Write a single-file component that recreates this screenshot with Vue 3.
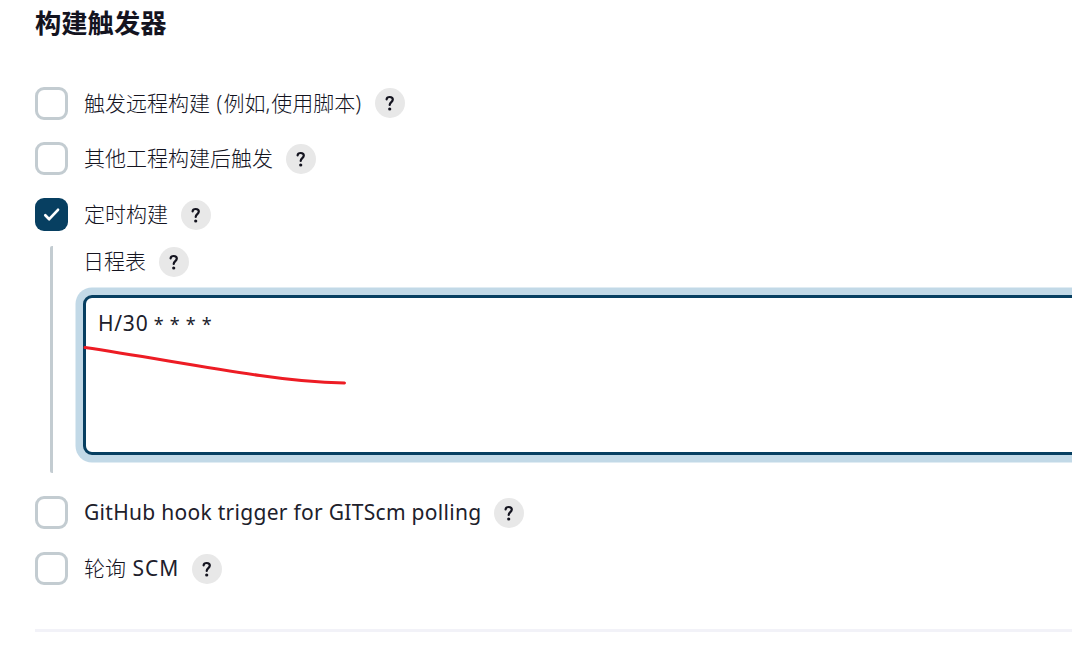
<script setup>
import { ref } from 'vue'

const before = [
  { id: 'remote', parts: ['触发远程构建', ' (', '例如', ',', '使用脚本', ')'], checked: false },
  { id: 'upstream', parts: ['其他工程构建后触发'], checked: false },
  { id: 'timer', parts: ['定时构建'], checked: true },
]
const after = [
  { id: 'github', parts: ['GitHub hook trigger for GITScm polling'], checked: false },
  { id: 'scm', parts: ['轮询', ' SCM'], checked: false },
]
const isLatin = (text) => /^[\x20-\x7e]+$/.test(text)
const schedule = ref('H/30 * * * *')
const period = () => schedule.value.split(' ')[0]
const rest = () => schedule.value.slice(period().length)
</script>

<template>
  <main class="page">
    <h2 class="title">构建触发器</h2>

    <div v-for="item in before" :key="item.id" class="row" :class="item.id">
      <span class="box" :class="{ checked: item.checked }">
        <svg v-if="item.checked" width="33" height="33" viewBox="0 0 33 33">
          <path d="M10.3 17.3 L14.2 21.2 L23 11.8" />
        </svg>
      </span>
      <span class="label"><span v-for="(part, i) in item.parts" :key="i" :class="{ latin: isLatin(part) }">{{ part }}</span></span>
      <span class="help"><svg width="30" height="30" viewBox="0 0 30 30"><path d="M11.6 11.3C11.8 9.8 13 9 14.7 9C16.6 9 17.8 10 17.8 11.6C17.8 14 14.7 14.2 14.7 16.9" /><circle cx="14.7" cy="21" r="1.6" /></svg></span>
    </div>

    <section class="nested">
      <div class="subrow">
        <span class="label">日程表</span>
        <span class="help"><svg width="30" height="30" viewBox="0 0 30 30"><path d="M11.6 11.3C11.8 9.8 13 9 14.7 9C16.6 9 17.8 10 17.8 11.6C17.8 14 14.7 14.2 14.7 16.9" /><circle cx="14.7" cy="21" r="1.6" /></svg></span>
      </div>
      <div class="field">
        <span class="value"><span class="period">{{ period() }}</span><span class="stars">{{ rest() }}</span></span>
        <svg class="stroke" width="270" height="44" viewBox="0 0 270 44">
          <path d="M3 3.5C60 12 120 23 178 31.5C205 35.5 235 38.5 262.5 39" />
        </svg>
      </div>
    </section>

    <div v-for="item in after" :key="item.id" class="row" :class="item.id">
      <span class="box"></span>
      <span class="label"><span v-for="(part, i) in item.parts" :key="i" :class="{ latin: isLatin(part) }">{{ part }}</span></span>
      <span class="help"><svg width="30" height="30" viewBox="0 0 30 30"><path d="M11.6 11.3C11.8 9.8 13 9 14.7 9C16.6 9 17.8 10 17.8 11.6C17.8 14 14.7 14.2 14.7 16.9" /><circle cx="14.7" cy="21" r="1.6" /></svg></span>
    </div>

    <hr class="divider" />
  </main>
</template>

<style>
body {
  background: #fff;
  overflow: hidden;
}
</style>

<style scoped>
.page {
  box-sizing: border-box;
  height: 663px;
  padding-left: 35px;
  overflow: hidden;
  color: #14141f;
  font-family: "Noto Sans", "Noto Sans CJK SC", sans-serif;
  font-size: 21px;
}
.title {
  margin: 0 0 43px;
  padding-top: 2px;
  height: 42px;
  line-height: 42px;
  font-size: 26.3px;
  font-weight: 700;
}
.row {
  display: flex;
  align-items: center;
  height: 33px;
  margin-bottom: 23px;
}
.remote {
  margin-bottom: 22px;
}
.timer {
  margin-bottom: 15px;
}
.box {
  box-sizing: border-box;
  flex: none;
  width: 33px;
  height: 33px;
  margin-right: 16px;
  border: 3px solid #c3ccd1;
  border-radius: 9px;
}
.box.checked {
  border: 0;
  background: #073f61;
}
.box svg {
  display: block;
}
.box path {
  fill: none;
  stroke: #fff;
  stroke-width: 2.7;
  stroke-linecap: round;
  stroke-linejoin: round;
}
.label {
  line-height: 33px;
  font-weight: 300;
  white-space: pre;
}
.latin {
  font-weight: 400;
  color: #20202b;
}
.remote .latin {
  font-weight: 300;
  letter-spacing: 1.05px;
}
.github .latin {
  letter-spacing: 0.29px;
}
.scm .latin {
  letter-spacing: 1px;
}
.help {
  flex: none;
  width: 30px;
  height: 30px;
  margin-left: 13px;
  border-radius: 50%;
  background: #e8e8e8;
}
.row .help {
  margin-top: 1px;
}
.remote .help {
  margin-top: 0;
  margin-bottom: 1px;
}
.help svg {
  display: block;
}
.help path {
  fill: none;
  stroke: #14141f;
  stroke-width: 2.2;
  stroke-linecap: round;
}
.help circle {
  fill: #14141f;
}
.nested {
  display: flow-root;
  box-sizing: border-box;
  height: 227px;
  margin: 0 0 23px 15px;
  padding-left: 30px;
  border-left: 3px solid #c3ccd1;
  border-radius: 2px;
}
.subrow {
  display: flex;
  align-items: center;
  height: 32px;
  margin: 0 0 17px 0;
}
.subrow .label {
  line-height: 31px;
  padding-bottom: 1px;
}
.field {
  position: relative;
  box-sizing: border-box;
  width: 1010px;
  height: 160px;
  padding: 9px 12px;
  border: 3px solid #073f61;
  border-radius: 9px;
  background: #fff;
  box-shadow: 0 0 0 7.5px #c2d9e7;
}
.value {
  display: block;
  line-height: 32px;
  font-weight: 400;
  color: #20202b;
  white-space: pre;
}
.period {
  letter-spacing: 0.75px;
}
.stars {
  font-size: 18px;
  letter-spacing: 0.7px;
}
.stroke {
  position: absolute;
  left: -4px;
  top: 46px;
}
.stroke path {
  fill: none;
  stroke: #ed1c24;
  stroke-width: 3;
  stroke-linecap: round;
}
.divider {
  height: 3px;
  margin: 44px 0 0;
  border: 0;
  background: #f2f2f8;
}
</style>
